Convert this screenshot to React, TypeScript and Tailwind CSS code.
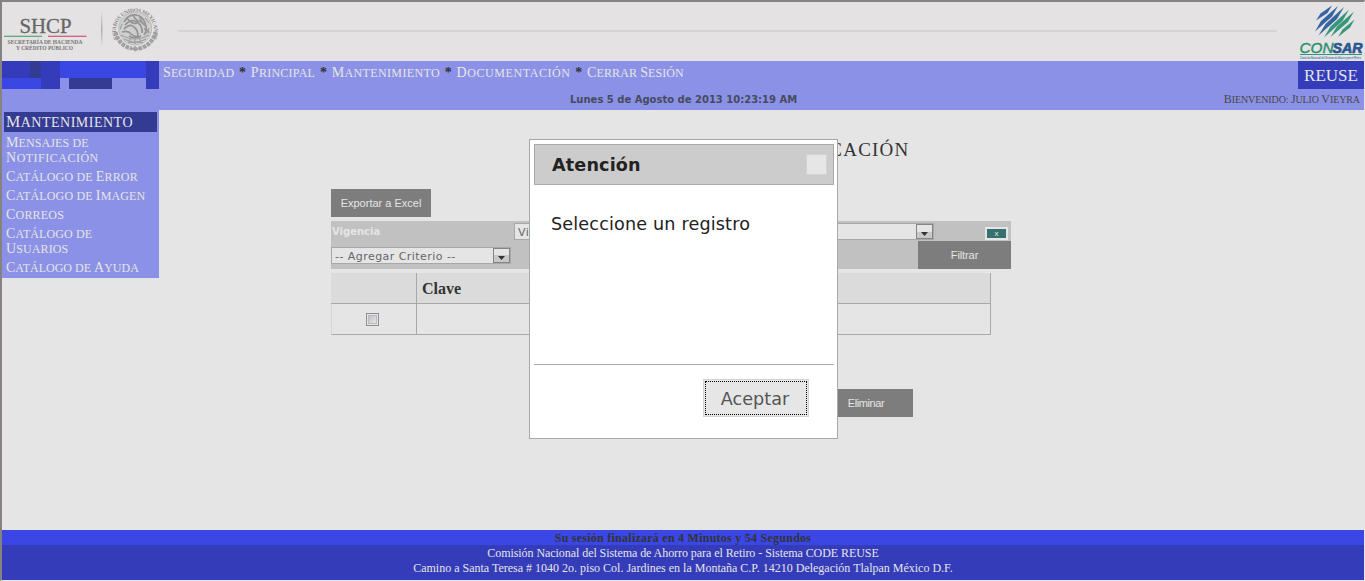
import { Fragment } from "react";

const menuItems = [
  { label: "Seguridad", spacing: "tracking-[0.1px]" },
  { label: "Principal", spacing: "tracking-[0.25px]" },
  { label: "Mantenimiento", spacing: "tracking-[0.37px]" },
  { label: "Documentación", spacing: "tracking-[0.58px]" },
  { label: "Cerrar Sesión", spacing: "tracking-[0.1px]" },
];

const sideItems = [
  { lines: ["Mensajes de"], more: "Notificación", spacing: "tracking-[0.1px]" },
  { lines: ["Catálogo de Error"], spacing: "tracking-[0.15px]" },
  { lines: ["Catálogo de Imagen"], spacing: "tracking-[0.15px]" },
  { lines: ["Correos"], spacing: "tracking-[0.2px]" },
  { lines: ["Catálogo de", "Usuarios"], spacing: "tracking-[0.1px]" },
  { lines: ["Catálogo de Ayuda"], spacing: "tracking-normal" },
];

/* Titling text: every word in capitals, with a larger initial on capitalised words */
function Titling({ text, initial }: { text: string; initial: string }) {
  return (
    <>
      {text.split(" ").map((word, i) => (
        <Fragment key={i}>
          {i > 0 && " "}
          <span className={"inline-block uppercase " + (/^\p{Lu}/u.test(word) ? initial : "")}>{word}</span>
        </Fragment>
      ))}
    </>
  );
}

function ShcpLogo() {
  return (
    <svg width="176" height="59" viewBox="2 2 176 59" className="shrink-0">
      <defs>
        <path id="seal" d="M 117.6 39 A 19.2 19.2 0 1 1 152.6 39" />
        <linearGradient id="rule" x1="0" y1="0" x2="0" y2="1">
          <stop offset="0" stopColor="#e4e2e2" />
          <stop offset="0.5" stopColor="#aaa" />
          <stop offset="1" stopColor="#e4e2e2" />
        </linearGradient>
      </defs>
      <g fontFamily="'Liberation Serif', serif" fill="#77777a">
        <text x="19.5" y="32.5" fontSize="20" textLength="52" lengthAdjust="spacingAndGlyphs" fill="#666668" stroke="#666668" strokeWidth="0.3">SHCP</text>
        <text x="7.5" y="43.6" fontSize="5.6" fontWeight="bold" textLength="75" lengthAdjust="spacingAndGlyphs">SECRETARÍA DE HACIENDA</text>
        <text x="16" y="50.3" fontSize="5.6" fontWeight="bold" textLength="57" lengthAdjust="spacingAndGlyphs">Y CRÉDITO PÚBLICO</text>
        <text fontSize="5.4" fontWeight="bold" fill="#8a8a8a">
          <textPath href="#seal" textLength="76">ESTADOS UNIDOS MEXICANOS</textPath>
        </text>
      </g>
      <rect x="4" y="35.7" width="38" height="1.2" fill="#4ea57c" />
      <rect x="48" y="35.7" width="38.5" height="1.2" fill="#cf5874" />
      <rect x="101" y="11" width="1.4" height="37" fill="url(#rule)" />
      <g fill="none" stroke="#a0a0a0">
        <circle cx="135.2" cy="28.5" r="16.5" fill="#d0cfcf" strokeWidth="0.8" stroke="#b2b2b2" />
        <path d="M115.5 32 A 20.5 20.5 0 0 0 132 48.5 M138.5 48.5 A 20.5 20.5 0 0 0 155.5 32" strokeWidth="4.2" strokeDasharray="3.6 0.9" />
        <path d="M132 49 l3 -2.5 3.5 2.5 -3 2z" fill="#a0a0a0" />
        <path d="M124 22 q4 -8 12 -7 q7 1 9 8 q3 7 -1 12 M125 25 q6 -7 12 -3 q6 4 5 11 M124 29 q6 -6 10 -2 q4 3 4 9 M127 18 q5 7 10 5 M133 15 q2 5 8 7 M140 17 q1 6 6 9 M122 32 q6 -2 9 2 q4 4 10 2 M129 36 q6 4 12 0 M144 29 q4 0 5 4" strokeWidth="1.7" stroke="#949494" />
        <path d="M121 35 q14 8 28 0 M124 39 q11 6 22 0 M128 42.5 h15 M130 38 v4 M135 39 v5 M140 38 v4 M145 18 l4 5 M122 24 l-2 5 M146 34 l3 -6" strokeWidth="1.1" />
      </g>
    </svg>
  );
}

function ConsarLogo() {
  return (
    <svg width="66" height="59" viewBox="1298 2 66 59" className="shrink-0">
      <g fill="#3465a0">
        <path d="M1316 20.500 L1320.500 13.500 L1332 5.500 L1327.500 13z" />
        <path d="M1315 31.500 L1321 21 L1338 6 L1332 16.500z" />
        <path d="M1318.500 35.500 L1325.500 24 L1344 7 L1337 19z" />
      </g>
      <g fill="#37967a">
        <path d="M1324 37.500 L1330.500 26.500 L1349 9.500 L1342.500 21z" />
        <path d="M1330.500 37 L1337 26.500 L1354 11.500 L1348 22z" />
        <path d="M1338 37 L1342.500 29.500 L1354.500 19.500 L1350 27.500z" />
      </g>
      <g fontFamily="'Liberation Sans', sans-serif" fontStyle="italic">
        <text x="1299.5" y="53" fontSize="15" textLength="34" lengthAdjust="spacingAndGlyphs" fill="#25906f" stroke="#25906f" strokeWidth="0.4">CON</text>
        <text x="1332.5" y="53" fontSize="15" fontWeight="bold" textLength="30" lengthAdjust="spacingAndGlyphs" fill="#28588f" stroke="#28588f" strokeWidth="0.7">SAR</text>
      </g>
      <rect x="1300" y="54" width="62" height="1" fill="#37967a" />
      <text x="1300" y="58.8" fontSize="4.2" fontFamily="'Liberation Sans', sans-serif" fontWeight="bold" textLength="61" lengthAdjust="spacingAndGlyphs" fill="#4a7ca6">Comisión Nacional del Sistema de Ahorro para el Retiro</text>
    </svg>
  );
}

function Mosaic() {
  return (
    <div className="flex h-7 w-[157px] shrink-0">
      <div className="flex w-[39px] flex-col">
        <div className="flex h-[17px] bg-[#343cba]">
          <div className="ml-7 w-[11px] bg-[#343b93]" />
        </div>
        <div className="h-[11px] bg-[#3a47e5]" />
      </div>
      <div className="w-[19px] bg-[#343cba]" />
      <div className="flex w-[86px] flex-col">
        <div className="h-[17px] bg-[#3a47e5]" />
        <div className="ml-[9px] h-[11px] w-[43px] bg-[#343b93]" />
      </div>
      <div className="w-[13px] bg-[#343cba]" />
    </div>
  );
}

function SelectBox({ label, className }: { label: string; className: string }) {
  return (
    <div className={"flex h-[17px] items-center justify-between border border-[#a8a8a8] bg-[#e5e5e5] font-['DejaVu_Sans',sans-serif] text-[11px] tracking-[0.45px] text-[#666] " + className}>
      <span className="pt-px pl-[3px] leading-none whitespace-nowrap">{label}</span>
      <span className="flex h-[15px] w-[17px] shrink-0 items-end justify-center border border-[#858585] bg-gradient-to-b from-[#e5e5e5] from-50% to-[#c8c8c8] to-50% pb-[2px]">
        <svg width="7" height="4" viewBox="0 0 7 4"><path d="M0 0h7L3.500 4z" fill="#333" /></svg>
      </span>
    </div>
  );
}

function Dialog() {
  return (
    <div className="absolute top-[139px] left-[529px] flex h-[300px] w-[309px] flex-col border border-[#a8a8a8] bg-white py-1 pr-[3px] pl-1 font-['DejaVu_Sans',sans-serif] text-[#222]">
      <div className="flex h-[41px] shrink-0 items-center justify-between border border-[#aaa] bg-[#ccc] pr-1.5 pl-[17px]">
        <h2 className="pt-0.5 text-[17.6px] leading-none font-bold tracking-[0.15px]">Atención</h2>
        <span className="size-[21px] border border-[#d3d3d3] bg-[#e6e6e6]" />
      </div>
      <p className="h-[179px] pt-[27px] pl-[17px] text-[17.6px] leading-6 tracking-[0.16px] whitespace-nowrap">Seleccione un registro</p>
      <div className="flex justify-end border-t border-[#aaa] pt-3.5 pr-[25px]">
        <button className="h-[38px] w-[106px] border border-[#d3d3d3] bg-[#e6e6e6] p-px text-[17.6px] leading-none text-[#555]">
          <span className="flex h-full items-center justify-center border border-dotted border-black pt-[3px] pr-0.5">Aceptar</span>
        </button>
      </div>
    </div>
  );
}

export default function App() {
  return (
    <div className="relative flex h-[581px] w-[1365px] flex-col overflow-hidden border-t-2 border-r border-b border-l-2 border-t-[#868282] border-r-[#e5e5e5] border-b-[#e5e5e5] border-l-[#868282] bg-[#e5e5e5] font-['Liberation_Serif',serif]">
      <header className="flex h-[59px] shrink-0 justify-between bg-[#e4e2e2]">
        <ShcpLogo />
        <div className="mt-7 mr-[21px] h-[2px] flex-1 bg-[#d5d3d3]" />
        <ConsarLogo />
      </header>

      <div className="flex h-[49px] shrink-0 bg-[#8b91e6]">
        <Mosaic />
        <div className="flex flex-1 flex-col">
          <nav className="flex h-7 items-start pt-[3px] pl-1 text-[12px] leading-[18px] text-[#e5e5e5]">
            {menuItems.map((item, i) => (
              <Fragment key={item.label}>
                {i > 0 && <span className="w-[16.5px] text-center text-[14px] font-bold text-[#333]">*</span>}
                <a className={"whitespace-nowrap " + item.spacing}><Titling text={item.label} initial="first-letter:text-[14px]" /></a>
              </Fragment>
            ))}
          </nav>
          <div className="pt-1 pl-[411px] font-['DejaVu_Sans',sans-serif] text-[10px] leading-[14px] font-bold whitespace-nowrap text-[#444c5c]">
            Lunes 5 de Agosto de 2013 10:23:19 AM
          </div>
        </div>
        <div className="flex flex-col items-end">
          <div className="flex h-7 w-[66px] items-center justify-center bg-[#343cba] pt-px text-[17px] text-[#e5e5e5]">REUSE</div>
          <div className="pt-[3px] pr-1 text-[10px] leading-[14px] tracking-[-0.1px] whitespace-nowrap text-[#484848]">
            <Titling text="Bienvenido: Julio Vieyra" initial="first-letter:text-[12px]" />
          </div>
        </div>
      </div>

      <div className="flex flex-1">
        <aside className="h-[168px] w-[157px] shrink-0 bg-[#8b91e6] px-0.5 pt-0.5 text-[#e5e5e5]">
          <div className="h-5 bg-[#343b93] pl-0.5 text-[14px] leading-5 tracking-[0.5px]">
            <Titling text="Mantenimiento" initial="first-letter:text-[16px]" />
          </div>
          <ul className="flex flex-col gap-1 pt-[3px] pl-0.5 text-[12px] leading-[15px]">
            {sideItems.map(({ lines, more, spacing }, i) => (
              <li key={i} className={spacing}>
                {lines.map((line) => (
                  <div key={line} className="h-[15px] whitespace-nowrap"><Titling text={line} initial="first-letter:text-[14px]" /></div>
                ))}
                {more && <div className="h-[15px] tracking-[0.5px] whitespace-nowrap"><Titling text={more} initial="first-letter:text-[14px]" /></div>}
              </li>
            ))}
          </ul>
        </aside>

        <main className="flex-1">
          <h1 className="pt-7 pl-px text-center text-[19px] leading-6 tracking-[1.2px] text-[#333]">MENSAJES DE NOTIFICACIÓN</h1>
          <div className="ml-[172px] w-[680px] pt-[27px]">
            <button className="block h-7 w-[100px] bg-[#7d7d7d] font-['Liberation_Sans',sans-serif] text-[11px] text-[#e5e5e5]">Exportar a Excel</button>
            <div className="mt-1 flex h-12 justify-between bg-[#c1c1c1]">
              <div className="flex flex-col">
                <span className="h-[26px] pl-px font-['DejaVu_Sans',sans-serif] text-[10px] leading-[21px] font-bold text-[#e5e5e5]">Vigencia</span>
                <SelectBox label="-- Agregar Criterio --" className="w-[180px]" />
              </div>
              <div className="flex flex-1 pt-0.5 pl-[3px]">
                <SelectBox label="Vi" className="w-[420px]" />
              </div>
              <div className="-ml-4 flex w-[93px] flex-col items-end">
                <button className="mt-1.5 mr-[3px] mb-[1px] h-[13px] w-[23px] border-2 border-[#e5e5e5] bg-[#34716f] text-center font-['Liberation_Sans',sans-serif] text-[8px] leading-[9px] text-[#e5e5e5]">x</button>
                <button className="h-7 w-[93px] bg-[#7d7d7d] font-['Liberation_Sans',sans-serif] text-[11px] tracking-[-0.1px] text-[#e5e5e5]">Filtrar</button>
              </div>
            </div>
            <div className="mt-1 grid h-[62px] w-[660px] grid-cols-[86px_1fr] grid-rows-2 text-[16px] font-bold text-[#333]">
              <div className="border-r border-b border-[#a8a8a8] bg-[#dbdbdb]" />
              <div className="flex items-center border-r border-b border-[#a8a8a8] bg-[#dbdbdb] pt-0.5 pl-[5px]">Clave</div>
              <div className="flex items-center justify-center border-r border-b border-l border-[#a8a8a8] border-l-[#d5d5d5] pr-[3px]">
                <span className="size-[13px] border border-[#8e8f8f] bg-[#e5e5e5] p-px">
                  <span className="block size-full border border-[#b8bcc0] bg-gradient-to-br from-[#bfc3c9] to-[#e5e5e5]" />
                </span>
              </div>
              <div className="border-r border-b border-[#a8a8a8]" />
            </div>
            <div className="mt-[54px] flex justify-end pr-[98px]">
              <button className="h-7 w-[94px] bg-[#7d7d7d] font-['Liberation_Sans',sans-serif] text-[11px] tracking-[-0.4px] text-[#e5e5e5]">Eliminar</button>
            </div>
          </div>
        </main>
      </div>

      <footer className="h-[50px] shrink-0 bg-[#343cba] text-center text-[12px] leading-[15px] text-[#e5e5e5]">
        <div className="h-[15px] bg-[#3a47e5] pt-px font-bold tracking-[0.25px] text-[#333]">Su sesión finalizará en 4 Minutos y 54 Segundos</div>
        <div className="pt-px tracking-[-0.06px]">Comisión Nacional del Sistema de Ahorro para el Retiro - Sistema CODE REUSE</div>
        <div>Camino a Santa Teresa # 1040 2o. piso Col. Jardines en la Montaña C.P. 14210 Delegación Tlalpan México D.F.</div>
      </footer>

      <div className="absolute -top-0.5 -left-0.5"><Dialog /></div>
    </div>
  );
}
